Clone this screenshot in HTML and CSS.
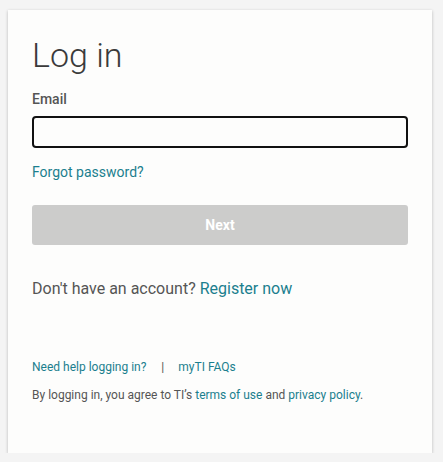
FILE: index.html
```html
<!DOCTYPE html>
<html>
<head>
<meta charset="utf-8">
<link rel="stylesheet" href="styles.css">
</head>
<body>
<div class="card">
  <h1 class="title">Log in</h1>
  <label class="label" for="email">Email</label>
  <input class="input" id="email" type="text">
  <a class="link forgot" href="#">Forgot password?</a>
  <button class="next" type="button">Next</button>
  <p class="register">Don't have an account? <a class="link" href="#">Register now</a></p>
  <div class="help">
    <a class="link" href="#">Need help logging in?</a>
    <span class="sep">|</span>
    <a class="link" href="#">myTI FAQs</a>
  </div>
  <p class="terms">By logging in, you agree to TI’s <a class="link" href="#">terms of use</a> and <a class="link" href="#">privacy policy</a>.</p>
</div>
</body>
</html>
```
FILE: styles.css
```css
html, body {
  margin: 0;
  padding: 0;
  background: #f4f4f4;
  font-family: Roboto, "Liberation Sans", sans-serif;
}
.card {
  box-sizing: border-box;
  margin: 10px 0 0 8px;
  width: 424px;
  height: 443px;
  background: #fdfdfc;
  padding: 25px 24px 0 24px;
  display: flex;
  flex-direction: column;
  align-items: flex-start;
  box-shadow: 0 1px 3px rgba(0,0,0,0.25);
}
.title {
  margin: 0;
  font-weight: 300;
  font-size: 34px;
  line-height: 40px;
  color: #3a3a3a;
}
.label {
  margin-top: 14px;
  font-size: 14px;
  font-weight: 500;
  line-height: 20px;
  color: #555;
}
.input {
  box-sizing: border-box;
  margin: 7px 0 0 0;
  width: 376px;
  height: 32px;
  border: 2px solid #111;
  border-radius: 4px;
  background: #fdfdfc;
  outline: none;
}
.link {
  color: #1b7f8e;
  text-decoration: none;
}
.forgot {
  margin-top: 14px;
  font-size: 14px;
  line-height: 20px;
}
.next {
  margin-top: 23px;
  width: 376px;
  height: 40px;
  border: none;
  border-radius: 3px;
  background: #cccccb;
  color: #fff;
  font-family: Roboto, "Liberation Sans", sans-serif;
  font-weight: 700;
  font-size: 14px;
  padding: 0;
}
.register {
  margin: 32px 0 0 0;
  font-size: 16px;
  line-height: 24px;
  color: #555;
}
.help {
  margin-top: 58px;
  font-size: 12px;
  line-height: 16px;
  color: #555;
  display: flex;
}
.sep {
  margin: 0 14px 0 15px;
}
.terms {
  margin: 12px 0 0 0;
  font-size: 12px;
  line-height: 16px;
  color: #555;
}
```
